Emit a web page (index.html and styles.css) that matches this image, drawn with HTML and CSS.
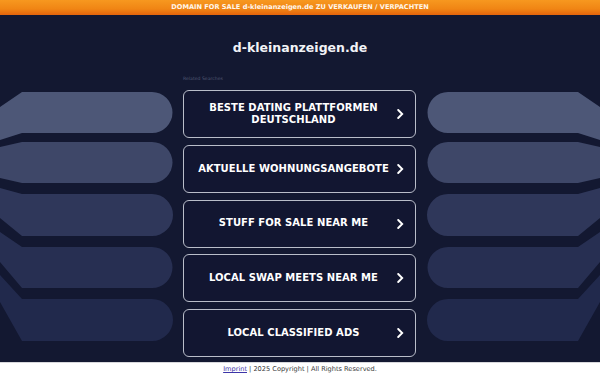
FILE: index.html
```html
<!DOCTYPE html>
<html lang="de">
<head>
<meta charset="utf-8">
<title>d-kleinanzeigen.de</title>
<link rel="stylesheet" href="styles.css">
</head>
<body>
<div class="page">
  <div class="banner">DOMAIN FOR SALE d-kleinanzeigen.de ZU VERKAUFEN / VERPACHTEN</div>
  <main class="main">
    <svg class="deco" viewBox="0 0 600 347" width="600" height="347" aria-hidden="true">
      <g transform="translate(0,-15)">
        <g class="side">
          <path fill="#4d5777" d="M0,107 L22,92 L152,92 A20.5,20.5 0 0 1 152,133 L22,133 L0,140 Z"/>
          <path fill="#3e4768" d="M0,147 L22,142 L152,142 A20.5,20.5 0 0 1 152,183 L22,183 L0,178 Z"/>
          <path fill="#2f375a" d="M0,188 L22,194 L152,194 A21,21 0 0 1 152,236 L22,236 L0,218 Z"/>
          <path fill="#272f52" d="M0,232 L22,247 L152,247 A20.5,20.5 0 0 1 152,288 L22,288 L0,262 Z"/>
          <path fill="#21294c" d="M0,275 L22,299 L152,299 A21,21 0 0 1 152,341 L22,341 L0,302 Z"/>
        </g>
        <g class="side" transform="translate(600,0) scale(-1,1)">
          <path fill="#4d5777" d="M0,107 L22,92 L152,92 A20.5,20.5 0 0 1 152,133 L22,133 L0,140 Z"/>
          <path fill="#3e4768" d="M0,147 L22,142 L152,142 A20.5,20.5 0 0 1 152,183 L22,183 L0,178 Z"/>
          <path fill="#2f375a" d="M0,188 L22,194 L152,194 A21,21 0 0 1 152,236 L22,236 L0,218 Z"/>
          <path fill="#272f52" d="M0,232 L22,247 L152,247 A20.5,20.5 0 0 1 152,288 L22,288 L0,262 Z"/>
          <path fill="#21294c" d="M0,275 L22,299 L152,299 A21,21 0 0 1 152,341 L22,341 L0,302 Z"/>
        </g>
      </g>
    </svg>
    <h1 class="title">d-kleinanzeigen.de</h1>
    <section class="related">
      <div class="label">Related Searches</div>
      <ul class="links">
        <li><a class="link" href="#"><span class="link-text">BESTE DATING PLATTFORMEN DEUTSCHLAND</span><svg class="chev" viewBox="0 0 7 10" width="7" height="10"><path d="M1.2,1 L5.2,5 L1.2,9" /></svg></a></li>
        <li><a class="link" href="#"><span class="link-text">AKTUELLE WOHNUNGSANGEBOTE</span><svg class="chev" viewBox="0 0 7 10" width="7" height="10"><path d="M1.2,1 L5.2,5 L1.2,9" /></svg></a></li>
        <li><a class="link" href="#"><span class="link-text">STUFF FOR SALE NEAR ME</span><svg class="chev" viewBox="0 0 7 10" width="7" height="10"><path d="M1.2,1 L5.2,5 L1.2,9" /></svg></a></li>
        <li><a class="link" href="#"><span class="link-text">LOCAL SWAP MEETS NEAR ME</span><svg class="chev" viewBox="0 0 7 10" width="7" height="10"><path d="M1.2,1 L5.2,5 L1.2,9" /></svg></a></li>
        <li><a class="link" href="#"><span class="link-text">LOCAL CLASSIFIED ADS</span><svg class="chev" viewBox="0 0 7 10" width="7" height="10"><path d="M1.2,1 L5.2,5 L1.2,9" /></svg></a></li>
      </ul>
    </section>
  </main>
  <footer class="footer"><a class="imprint" href="#">Imprint</a> | 2025 Copyright | All Rights Reserved.</footer>
</div>
</body>
</html>
```
FILE: styles.css
```css
* { box-sizing: border-box; }
html, body { margin: 0; padding: 0; }
body {
  background: #131831;
  font-family: "DejaVu Sans", Verdana, sans-serif;
  width: 600px;
  height: 375px;
  overflow: hidden;
}
.page {
  display: flex;
  flex-direction: column;
  height: 375px;
}
.banner {
  height: 15px;
  flex: none;
  background: linear-gradient(180deg, #f7981f 0%, #f08514 60%, #e4640c 100%);
  color: #fff6ea;
  font-weight: bold;
  font-size: 6.6px;
  line-height: 15px;
  text-align: center;
  white-space: nowrap;
}
.main {
  position: relative;
  flex: 1;
  display: flex;
  flex-direction: column;
  align-items: center;
}
.deco {
  position: absolute;
  left: 0;
  top: 0;
  z-index: 0;
}
.title {
  position: relative;
  z-index: 1;
  margin: 25px 0 0;
  font-size: 12.5px;
  line-height: 15px;
  font-weight: bold;
  color: #f2f3f7;
}
.related {
  position: relative;
  z-index: 1;
  width: 233px;
  margin-top: 21px;
  margin-left: -1px;
}
.label {
  font-size: 4.6px;
  line-height: 6px;
  color: #4f5672;
  margin-bottom: 8px;
}
.links {
  list-style: none;
  margin: 0;
  padding: 0;
  display: flex;
  flex-direction: column;
  gap: 6.75px;
}
.link {
  display: flex;
  align-items: center;
  height: 48px;
  padding: 0 11px 0 10px;
  border: 1.5px solid #b9bdc9;
  border-radius: 6px;
  background: #121631;
  text-decoration: none;
  color: #ffffff;
}
.link-text {
  flex: 1;
  text-align: center;
  font-weight: bold;
  font-size: 10px;
  line-height: 12.5px;
  letter-spacing: 0.05px;
}
.chev {
  flex: none;
  margin-left: 4px;
  fill: none;
  stroke: #ffffff;
  stroke-width: 1.9;
  stroke-linecap: round;
  stroke-linejoin: miter;
}
.footer {
  height: 13px;
  flex: none;
  background: #ffffff;
  border-top: 1px solid #d8d8dc;
  color: #3a3a3a;
  font-size: 6.6px;
  line-height: 12px;
  text-align: center;
}
.imprint {
  color: #3d35a8;
  text-decoration: underline;
}
```
